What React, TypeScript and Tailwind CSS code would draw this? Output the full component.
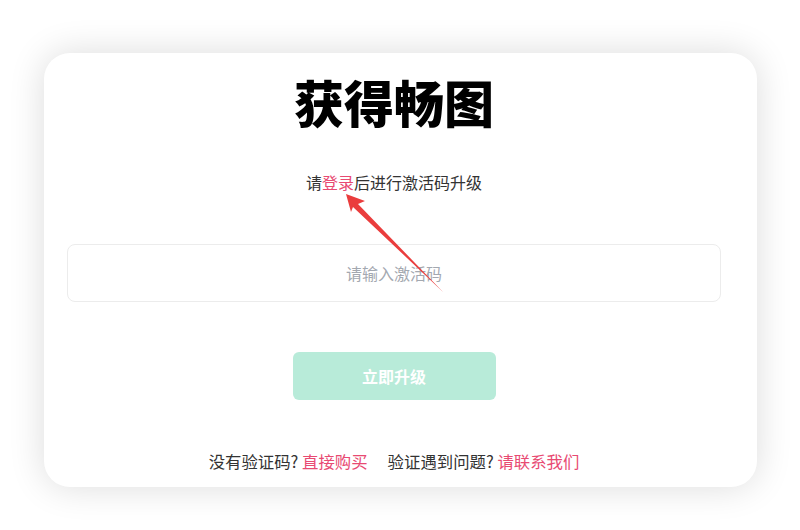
const font = { fontFamily: '"Noto Sans CJK SC", "Noto Sans", sans-serif' };

const Arrow = () => (
  <svg
    className="absolute inset-0 pointer-events-none"
    width="800"
    height="530"
    viewBox="0 0 800 530"
  >
    <polygon
      points="346,194 365,201 358,204 443,292 353,207 351,212"
      fill="#ea3d3d"
    />
  </svg>
);

const App = () => {
  return (
    <div className="relative w-[800px] h-[530px] bg-white" style={font}>
      <div className="pt-[53px] px-[44px]">
        <div className="w-[713px] h-[434px] bg-white rounded-[26px] shadow-[0_0_36px_rgba(0,0,0,0.14)] flex flex-col items-center pt-[19px] pl-[23px] pr-[36px]">
          <h1 className="text-[50px] leading-[58px] font-black text-black">获得畅图</h1>

          <p className="mt-[40px] text-[16px] leading-[24px] text-[#333]">
            请<span className="text-[#e84a72] cursor-pointer">登录</span>后进行激活码升级
          </p>

          <div className="mt-[50px] w-full">
            <input
              className="w-full h-[58px] rounded-[8px] border border-[#ececec] text-center text-[16px] text-[#333] placeholder:text-[#a3a8b0] outline-none"
              placeholder="请输入激活码"
            />
          </div>

          <button className="mt-[50px] w-[203px] h-[48px] rounded-[6px] bg-[#b8ebd9] text-white text-[16px] font-bold">
            立即升级
          </button>

          <div className="mt-[49px] flex items-center gap-[20px] text-[16.4px] leading-[24px] text-[#333]">
            <span>
              没有验证码? <span className="text-[#e84a72] cursor-pointer">直接购买</span>
            </span>
            <span>
              验证遇到问题? <span className="text-[#e84a72] cursor-pointer">请联系我们</span>
            </span>
          </div>
        </div>
      </div>
      <Arrow />
    </div>
  );
};

export default App;
